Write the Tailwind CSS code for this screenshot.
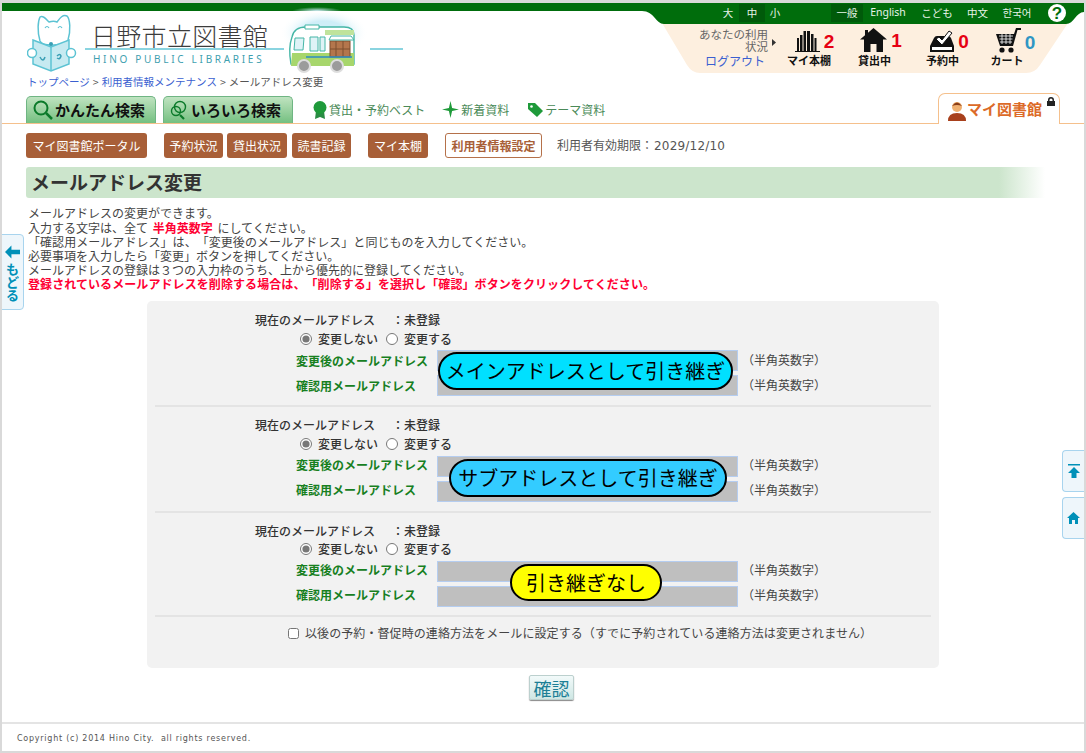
<!DOCTYPE html>
<html lang="ja">
<head>
<meta charset="utf-8">
<title>メールアドレス変更</title>
<script src="https://cdn.jsdelivr.net/npm/@tailwindcss/browser@4"></script>
</head>
<body class="bg-white font-['Noto_Sans_CJK_JP','Noto_Sans',sans-serif] text-[12px] text-[#444] [text-spacing-trim:space-all]">
<div class="relative flex h-[753px] w-[1086px] flex-col overflow-hidden border-x-2 border-t-[3px] border-b-2 border-[#d9d9d9] bg-white">

  <!-- header top -->
  <header class="flex h-[90px] shrink-0">
    <div class="relative w-[640px] shrink-0">
      <div class="h-[8px] bg-[#006d0c]"></div>
      <span class="absolute top-[4px] left-[290px] h-[4px] w-[50px] bg-[radial-gradient(ellipse_at_bottom,#cfeaf6,#006d0c_70%)]"></span>
      <div class="flex h-[61px] items-start pl-[25px]">
        <svg class="mt-[2px] h-[59px] w-[50px] shrink-0" viewBox="0 0 50 59" fill="none" stroke="#5cc3d3" stroke-width="1.5">
          <path d="M13 28C10 18 11 8 13 4c3-2 6 2 9 5 3-1 6-1 8 0 3-4 6-8 10-6 3 3 4 14 1 24-2 6-26 7-28 1z" fill="#fff"/>
          <path d="M18 15q2-3 4 0M31 15q2-3 4 0" stroke-width="1.2"/>
          <path d="M6 27l18 7 18-7v24l-18 7-18-7z" fill="#c6eaf1"/>
          <path d="M24 34v24"/>
          <circle cx="24" cy="31" r="2" fill="#3a9fb5" stroke="none"/>
          <circle cx="5" cy="40" r="4.5" fill="#fff"/>
          <circle cx="44" cy="40" r="4.5" fill="#fff"/>
          <path d="M13 44q3 6 5 0M30 43q3-3 4 0-1 4-4 2" stroke="#3a9fb5"/>
        </svg>
        <div class="ml-[8px] flex w-[199px] shrink-0 flex-col">
          <div class="mt-[11px] ml-[6px] h-[26px] whitespace-nowrap text-[25px] leading-[26px] font-light tracking-[0.3px] text-[#3c3c3c]">日野市立図書館</div>
          <div class="h-[2px] bg-[#8ad4e0]"></div>
          <div class="mt-[3px] ml-[8px] text-[10px] leading-[12px] tracking-[2.7px] whitespace-nowrap text-[#3f9fb0] font-['Noto_Sans',sans-serif]">HINO PUBLIC LIBRARIES</div>
        </div>
        <svg class="mt-[2px] ml-[-4px] h-[62px] w-[88px] shrink-0" viewBox="0 0 88 62">
          <defs><radialGradient id="glow"><stop offset="0.5" stop-color="#cfeef8"/><stop offset="1" stop-color="#fff" stop-opacity="0"/></radialGradient></defs>
          <ellipse cx="44" cy="20" rx="44" ry="24" fill="url(#glow)"/>
          <path d="M12 24q2-10 14-10h38q10 0 10 8v29H11q-3-16 1-27z" fill="#fff" stroke="#45b6a6" stroke-width="1.4"/>
          <path d="M12 40h62v13H11z" fill="#a7d66c"/>
          <path d="M25 12h14v4H25z" fill="#fff" stroke="#45b6a6"/>
          <path d="M45 17h29v5H45z" fill="#bfe39c"/>
          <path d="M15 25h9l-1 12h-9zM30 24h8v14h-8zM40 24h5v14h-5z" fill="#dff3f7" stroke="#45b6a6"/>
          <rect x="50" y="28" width="20" height="16" fill="#b4764c" stroke="#7d4e2f"/>
          <path d="M49 27l2-4h20l3 4z" fill="#fff" stroke="#45b6a6"/>
          <path d="M56 28v16M63 28v16M50 36h20" stroke="#7d4e2f"/>
          <path d="M26 44h46" stroke="#2b8dc4" stroke-width="1.6"/>
          <circle cx="24" cy="53" r="6" fill="#9b9b9b" stroke="#ddd" stroke-width="2"/>
          <circle cx="57" cy="53" r="6" fill="#9b9b9b" stroke="#ddd" stroke-width="2"/>
        </svg>
        <div class="mt-[37px] ml-[2px] h-[2px] w-[33px] bg-[#8ad4e0]"></div>
      </div>
      <nav class="mt-[3px] ml-[25px] flex gap-[3px] whitespace-nowrap text-[10.5px] leading-[14px] text-[#555]">
        <a class="text-[#3b5fd0]">トップページ</a><span>&gt;</span><a class="text-[#3b5fd0]">利用者情報メンテナンス</a><span>&gt;</span><span>メールアドレス変更</span>
      </nav>
    </div>

    <div class="relative w-[442px] shrink-0">
      <svg class="absolute top-0 left-0 h-[75px] w-[442px]" viewBox="0 0 442 75">
        <path d="M20 20H426L398 62Q393 70 384 70H58Q50 70 45 62Z" fill="#fdefdf"/>
        <path d="M0 0H442V9C434 9 432 21 424 21H22C14 21 12 8 0 8Z" fill="#006d0c"/>
      </svg>
      <div class="relative flex h-[20px] items-center text-[10.5px] whitespace-nowrap text-[#e8f3e8]">
        <span class="ml-[75px] w-[22px] text-center">大</span>
        <span class="w-[26px] bg-[#005a0a] text-center leading-[18px]">中</span>
        <span class="ml-[-2px] w-[24px] text-center">小</span>
        <span class="ml-[44px] w-[32px] bg-[#005a0a] text-center leading-[18px]">一般</span>
        <span class="ml-[7px] w-[36px] text-center font-['Noto_Sans',sans-serif]">English</span>
        <span class="ml-[15px] w-[32px] text-center">こども</span>
        <span class="ml-[14px] w-[20px] text-center">中文</span>
        <span class="ml-[14px] w-[32px] text-center font-['Noto_Sans_CJK_KR',sans-serif]">한국어</span>
        <span class="ml-[15px] flex size-[18px] items-center justify-center rounded-full bg-white text-[17px] leading-none font-bold text-[#006d0c] font-['Liberation_Sans',sans-serif]">?</span>
      </div>
      <div class="relative flex">
        <div class="ml-[48px] w-[78px] pt-[5px] text-right">
          <div class="text-[11.5px] leading-[12px] text-[#666]">あなたの利用<br>状況</div>
          <a class="mt-[1px] mr-[3px] block text-[12px] leading-[16px] whitespace-nowrap text-[#3b5fd0]">ログアウト</a>
        </div>
        <svg class="mt-[16px] ml-[4px] h-[7px] w-[4px]" viewBox="0 0 4 7"><path d="M0 0l4 3.5L0 7z" fill="#333"/></svg>
        <div class="mt-[4px] ml-[10px] flex w-[52px] flex-col items-center">
          <div class="flex h-[26px] items-end pl-[5px]">
            <svg class="mb-[1px] h-[22px] w-[25px]" viewBox="0 0 25 22" fill="#111"><path d="M2 8h2v13H2zM5 5h2.500v16H5zM8.500 1h2.500v20H8.500zM12 1h3v20h-3zM16 4h2.500v17H16zM19.500 8h2v13h-2zM0 21h25v1H0z"/></svg>
            <span class="ml-[4px] text-[19px] leading-[22px] font-bold text-[#e60012] font-['Liberation_Sans',sans-serif]">2</span>
          </div>
          <span class="-ml-[6px] text-[11px] leading-[14px] font-bold whitespace-nowrap text-[#111]">マイ本棚</span>
        </div>
        <div class="mt-[4px] ml-[15px] flex w-[50px] flex-col items-center">
          <div class="flex h-[26px] items-end pl-[6px]">
            <svg class="mb-[1px] h-[24px] w-[27px]" viewBox="0 0 27 24" fill="#111"><path d="M13.500 0L27 11.500h-4V24h-6.500v-8h-6v8H4V11.500H0L5 7.300V2h3v2.700z"/></svg>
            <span class="ml-[4px] text-[19px] leading-[24px] font-bold text-[#e60012] font-['Liberation_Sans',sans-serif]">1</span>
          </div>
          <span class="-ml-[7px] text-[11px] leading-[14px] font-bold whitespace-nowrap text-[#111]">貸出中</span>
        </div>
        <div class="mt-[4px] ml-[17px] flex w-[50px] flex-col items-center">
          <div class="flex h-[26px] items-end pl-[8px]">
            <svg class="h-[24px] w-[26px]" viewBox="0 0 26 24"><path d="M1 23v-6L5 9q1-2 3-2h11q2 0 3 2l3 8v6z" fill="#111"/><path d="M3 18h20v3H3z" fill="#fff"/><path d="M10 8l3 3 7-9 3 2-10 12-6-6z" fill="#fff" stroke="#111"/></svg>
            <span class="ml-[3px] text-[19px] leading-[22px] font-bold text-[#e60012] font-['Liberation_Sans',sans-serif]">0</span>
          </div>
          <span class="-ml-[5px] text-[11px] leading-[14px] font-bold whitespace-nowrap text-[#111]">予約中</span>
        </div>
        <div class="mt-[4px] ml-[15px] flex w-[50px] flex-col items-center">
          <div class="flex h-[26px] items-end pl-[10px]">
            <svg class="h-[25px] w-[27px]" viewBox="0 0 27 25"><path d="M1 6h18l2-6h5v2h-3.500L18 18H5z" fill="#111"/><path d="M4 8h14M4.500 11h13M5 14h12M7 6v10M11 6v10M15 6v10" stroke="#fff" stroke-width=".8"/><circle cx="7" cy="22" r="2.600" fill="#111"/><circle cx="16" cy="22" r="2.600" fill="#111"/></svg>
            <span class="ml-[3px] text-[19px] leading-[20px] font-bold text-[#2f96c4] font-['Liberation_Sans',sans-serif]">0</span>
          </div>
          <span class="-ml-[6px] text-[11px] leading-[14px] font-bold whitespace-nowrap text-[#111]">カート</span>
        </div>
      </div>
    </div>
  </header>

  <!-- tabs -->
  <div class="flex h-[31px] shrink-0 items-end border-b border-[#f5c08c] pl-[24px]">
    <a class="flex h-[27px] w-[130px] items-center gap-[2px] rounded-t-[5px] border border-b-0 border-[#6fb583] bg-linear-to-b from-[#bfe3c0] to-[#74c081] pl-[6px] text-[15px] font-bold whitespace-nowrap text-[#111]">
      <svg class="h-[20px] w-[20px] shrink-0" viewBox="0 0 20 20" fill="none" stroke="#0b7a2a" stroke-width="2"><circle cx="8" cy="8" r="6.500"/><path d="M13 13l6 6" stroke-width="2.500"/></svg>かんたん検索
    </a>
    <a class="ml-[7px] flex h-[27px] w-[130px] items-center gap-[1px] rounded-t-[5px] border border-b-0 border-[#6fb583] bg-linear-to-b from-[#bfe3c0] to-[#74c081] pl-[6px] text-[15px] font-bold whitespace-nowrap text-[#111]">
      <svg class="h-[20px] w-[20px] shrink-0" viewBox="0 0 20 20" fill="none" stroke="#0b7a2a" stroke-width="1.400"><circle cx="10" cy="7" r="5.500"/><circle cx="6" cy="11" r="4.500"/><path d="M10 15l4 4" stroke-width="2.200"/></svg>いろいろ検索
    </a>
    <div class="ml-[20px] flex h-[27px] items-center text-[12px] whitespace-nowrap text-[#4a8a58]">
      <svg class="mr-[2px] h-[18px] w-[14px]" viewBox="0 0 14 18" fill="#1f9a3a"><path d="M3 10l-1 8 5-2 5 2-1-8z" fill="#2a8c44"/><circle cx="7" cy="6.500" r="6.500"/></svg>
      <span>貸出・予約ベスト</span>
      <svg class="mr-[2px] ml-[17px] h-[17px] w-[17px]" viewBox="0 0 16 16" fill="#1f9a3a"><path d="M8 0l1.500 6.500L16 8l-6.500 1.500L8 16 6.500 9.500 0 8l6.500-1.500z"/></svg>
      <span>新着資料</span>
      <svg class="mr-[2px] ml-[18px] h-[15px] w-[16px]" viewBox="0 0 16 15" fill="#1f9a3a"><path d="M1 1h7l8 8-6 6-9-8z"/><circle cx="4.500" cy="4.500" r="1.300" fill="#fff"/></svg>
      <span>テーマ資料</span>
    </div>
    <a class="relative mr-[24px] ml-auto flex h-[31px] w-[122px] translate-y-px items-center rounded-t-[7px] border-x border-t border-[#f5c08c] bg-white pl-[8px] text-[15px] font-bold whitespace-nowrap text-[#dc6a28]">
      <svg class="mt-[3px] h-[20px] w-[20px] shrink-0" viewBox="0 0 20 20"><circle cx="10" cy="6" r="5" fill="#f0b070"/><path d="M5 5q5-7 10 0-5-2-10 0z" fill="#8a3d17"/><path d="M1 20q0-8 9-8t9 8z" fill="#a8401c"/></svg>マイ図書館
      <svg class="absolute top-[3px] right-[4px] h-[9px] w-[8px]" viewBox="0 0 8 9"><path d="M1 4V3a3 3 0 016 0v1h1v5H0V4zm1.500 0h3V3a1.500 1.500 0 00-3 0z" fill="#222"/></svg>
    </a>
  </div>

  <!-- sub nav -->
  <div class="mt-[9px] ml-[24px] flex h-[25px] shrink-0 items-stretch text-[12px] whitespace-nowrap">
    <a class="flex w-[121px] items-center justify-center rounded-[3px] bg-[#a85f38] text-[#fff]">マイ図書館ポータル</a>
    <a class="ml-[17px] flex w-[59px] items-center justify-center rounded-[3px] bg-[#a85f38] text-[#fff]">予約状況</a>
    <a class="ml-[4px] flex w-[60px] items-center justify-center rounded-[3px] bg-[#a85f38] text-[#fff]">貸出状況</a>
    <a class="ml-[5px] flex w-[59px] items-center justify-center rounded-[3px] bg-[#a85f38] text-[#fff]">読書記録</a>
    <a class="ml-[17px] flex w-[60px] items-center justify-center rounded-[3px] bg-[#a85f38] text-[#fff]">マイ本棚</a>
    <a class="ml-[17px] flex w-[97px] items-center justify-center rounded-[3px] border border-[#b5714a] bg-white font-bold text-[#a85f38]">利用者情報設定</a>
    <span class="ml-[15px] self-center text-[#555]">利用者有効期限：<span class="ml-px tracking-[0.2px] font-['DejaVu_Sans',sans-serif]">2029/12/10</span></span>
  </div>

  <!-- title -->
  <h1 class="mt-[9px] ml-[24px] flex h-[31px] w-[1019px] shrink-0 items-center rounded-l-[3px] bg-[linear-gradient(to_right,#cce5cc_0,#cce5cc_95.500%,#fff_100%)] pl-[5px] text-[19px] font-bold text-[#333]">メールアドレス変更</h1>

  <!-- description -->
  <div class="mt-[8px] ml-[26px] h-[84px] shrink-0 text-[12px] leading-[14px] whitespace-nowrap text-[#444]">
    <p class="mb-px">メールアドレスの変更ができます。</p>
    <p>入力する文字は、全て <b class="ml-[2px] mr-[2px] text-[#ff0033]">半角英数字</b> にしてください。</p>
    <p class="tracking-[0.05px]">「確認用メールアドレス」は、「変更後のメールアドレス」と同じものを入力してください。</p>
    <p>必要事項を入力したら「変更」ボタンを押してください。</p>
    <p>メールアドレスの登録は３つの入力枠のうち、上から優先的に登録してください。</p>
    <p class="font-bold tracking-[0.08px] text-[#ff0033]">登録されているメールアドレスを削除する場合は、「削除する」を選択し「確認」ボタンをクリックしてください。</p>
  </div>

  <!-- form -->
  <form class="mt-[11px] ml-[145px] h-[367px] w-[792px] shrink-0 rounded-[5px] bg-[#f2f2f2] pt-px text-[#333]">
    <section class="mx-[8px] h-[105px] border-b-2 border-[#e4e4e4] pt-[11px]">
      <div class="ml-[100px] flex leading-[14px] font-medium"><span class="w-[121px]">現在のメールアドレス</span><span class="ml-[16px] w-[12px]">：</span><span>未登録</span></div>
      <div class="mt-[5px] ml-[145px] flex h-[14px] items-center font-medium">
        <input type="radio" name="a" checked class="m-0 size-[12px] accent-[#777]"><span class="ml-[6px]">変更しない</span>
        <input type="radio" name="a" class="m-0 ml-[8px] size-[12px]"><span class="ml-[6px]">変更する</span>
      </div>
      <div class="relative mt-[4px] ml-[141px] flex flex-col gap-[4px]">
        <div class="flex h-[21px] items-center"><label class="w-[141px] font-bold text-[#17801f]">変更後のメールアドレス</label><input class="h-[21px] w-[301px] border border-[#b5cdf0] bg-[#bfbfbf]"><span class="-mt-[1px] ml-[4px] text-[#444]">（半角英数字）</span></div>
        <div class="flex h-[21px] items-center"><label class="w-[141px] font-bold text-[#17801f]">確認用メールアドレス</label><input class="h-[21px] w-[301px] border border-[#b5cdf0] bg-[#bfbfbf]"><span class="-mt-[1px] ml-[4px] text-[#444]">（半角英数字）</span></div>
        <span class="absolute top-[2px] left-[142px] flex h-[38px] w-[295px] items-center justify-center rounded-full border-2 border-black bg-[#00e0ff] text-[20px] leading-none whitespace-nowrap text-black">メインアドレスとして引き継ぎ</span>
      </div>
    </section>
    <section class="mx-[8px] h-[106px] border-b-2 border-[#e4e4e4] pt-[11px]">
      <div class="ml-[100px] flex leading-[14px] font-medium"><span class="w-[121px]">現在のメールアドレス</span><span class="ml-[16px] w-[12px]">：</span><span>未登録</span></div>
      <div class="mt-[5px] ml-[145px] flex h-[14px] items-center font-medium">
        <input type="radio" name="b" checked class="m-0 size-[12px] accent-[#777]"><span class="ml-[6px]">変更しない</span>
        <input type="radio" name="b" class="m-0 ml-[8px] size-[12px]"><span class="ml-[6px]">変更する</span>
      </div>
      <div class="relative mt-[5px] ml-[141px] flex flex-col gap-[4px]">
        <div class="flex h-[21px] items-center"><label class="-mt-[3px] w-[141px] font-bold text-[#17801f]">変更後のメールアドレス</label><input class="h-[21px] w-[301px] border border-[#b5cdf0] bg-[#bfbfbf]"><span class="-mt-[3px] ml-[4px] text-[#444]">（半角英数字）</span></div>
        <div class="flex h-[21px] items-center"><label class="-mt-[3px] w-[141px] font-bold text-[#17801f]">確認用メールアドレス</label><input class="h-[21px] w-[301px] border border-[#b5cdf0] bg-[#bfbfbf]"><span class="-mt-[3px] ml-[4px] text-[#444]">（半角英数字）</span></div>
        <span class="absolute top-[3px] left-[153px] flex h-[38px] w-[278px] items-center justify-center rounded-full border-2 border-black bg-[#33ccff] text-[20px] leading-none whitespace-nowrap text-black">サブアドレスとして引き継ぎ</span>
      </div>
    </section>
    <section class="mx-[8px] h-[104px] border-b-2 border-[#e4e4e4] pt-[11px]">
      <div class="ml-[100px] flex leading-[14px] font-medium"><span class="w-[121px]">現在のメールアドレス</span><span class="ml-[16px] w-[12px]">：</span><span>未登録</span></div>
      <div class="mt-[4px] ml-[145px] flex h-[14px] items-center font-medium">
        <input type="radio" name="c" checked class="m-0 size-[12px] accent-[#777]"><span class="ml-[6px]">変更しない</span>
        <input type="radio" name="c" class="m-0 ml-[8px] size-[12px]"><span class="ml-[6px]">変更する</span>
      </div>
      <div class="relative mt-[5px] ml-[141px] flex flex-col gap-[4px]">
        <div class="flex h-[21px] items-center"><label class="-mt-[3px] w-[141px] font-bold text-[#17801f]">変更後のメールアドレス</label><input class="h-[21px] w-[301px] border border-[#b5cdf0] bg-[#bfbfbf]"><span class="-mt-[3px] ml-[4px] text-[#444]">（半角英数字）</span></div>
        <div class="flex h-[21px] items-center"><label class="-mt-[3px] w-[141px] font-bold text-[#17801f]">確認用メールアドレス</label><input class="h-[21px] w-[301px] border border-[#b5cdf0] bg-[#bfbfbf]"><span class="-mt-[3px] ml-[4px] text-[#444]">（半角英数字）</span></div>
        <span class="absolute top-[3px] left-[214px] flex h-[37px] w-[152px] items-center justify-center rounded-full border-2 border-black bg-[#ffff00] text-[20px] leading-none whitespace-nowrap text-black">引き継ぎなし</span>
      </div>
    </section>
    <label class="mt-[9px] ml-[141px] flex h-[14px] items-center whitespace-nowrap text-[#444]">
      <input type="checkbox" class="m-0 size-[11px]"><span class="ml-[6px] tracking-[0.08px]">以後の予約・督促時の連絡方法をメールに設定する（すでに予約されている連絡方法は変更されません）</span>
    </label>
  </form>

  <button class="mt-[7px] ml-[527px] flex h-[25px] w-[45px] shrink-0 items-center justify-center rounded-[2px] border border-[#bcd0ce] bg-linear-to-b from-[#f2fafa] to-[#cfe7e4] text-[18px] leading-none text-[#1d7f96] shadow-[0_1px_1px_#888]">確認</button>

  <footer class="mt-[22px] flex h-[29px] shrink-0 items-center border-t-2 border-[#e4e4e4] pt-[2px] pl-[15px] font-['DejaVu_Sans',sans-serif] text-[8px] tracking-[0.75px] whitespace-pre text-[#555]">Copyright (c) 2014 Hino City.  all rights reserved.</footer>

  <!-- floating side tabs -->
  <a class="absolute top-[231px] -left-px flex h-[76px] w-[23px] flex-col items-center rounded-r-[4px] border border-[#a8d4ee] bg-[#eef6fb] pt-[10px] text-[#0090b8]">
    <svg class="h-[14px] w-[15px]" viewBox="0 0 14 12" fill="#0090b8"><path d="M6 0v4h8v4H6v4L0 6z"/></svg>
    <span class="mt-[3px] w-[13px] text-[13px] leading-[13px] font-bold">もどる</span>
  </a>
  <a class="absolute top-[447px] right-0 flex h-[42px] w-[22px] items-center justify-center rounded-l-[4px] border border-r-0 border-[#a8d4ee] bg-[#eef6fb]">
    <svg class="h-[14px] w-[12px]" viewBox="0 0 12 14" fill="#0090b8"><path d="M0 0h12v1.500H0zM6 3l6 6H8.500v5h-5V9H0z"/></svg>
  </a>
  <a class="absolute top-[494px] right-0 flex h-[42px] w-[22px] items-center justify-center rounded-l-[4px] border border-r-0 border-[#a8d4ee] bg-[#eef6fb]">
    <svg class="h-[12px] w-[13px]" viewBox="0 0 13 12" fill="#0090b8"><path d="M6.500 0L13 6h-2v6H8V8H5v4H2V6H0z"/></svg>
  </a>
</div>
</body>
</html>
